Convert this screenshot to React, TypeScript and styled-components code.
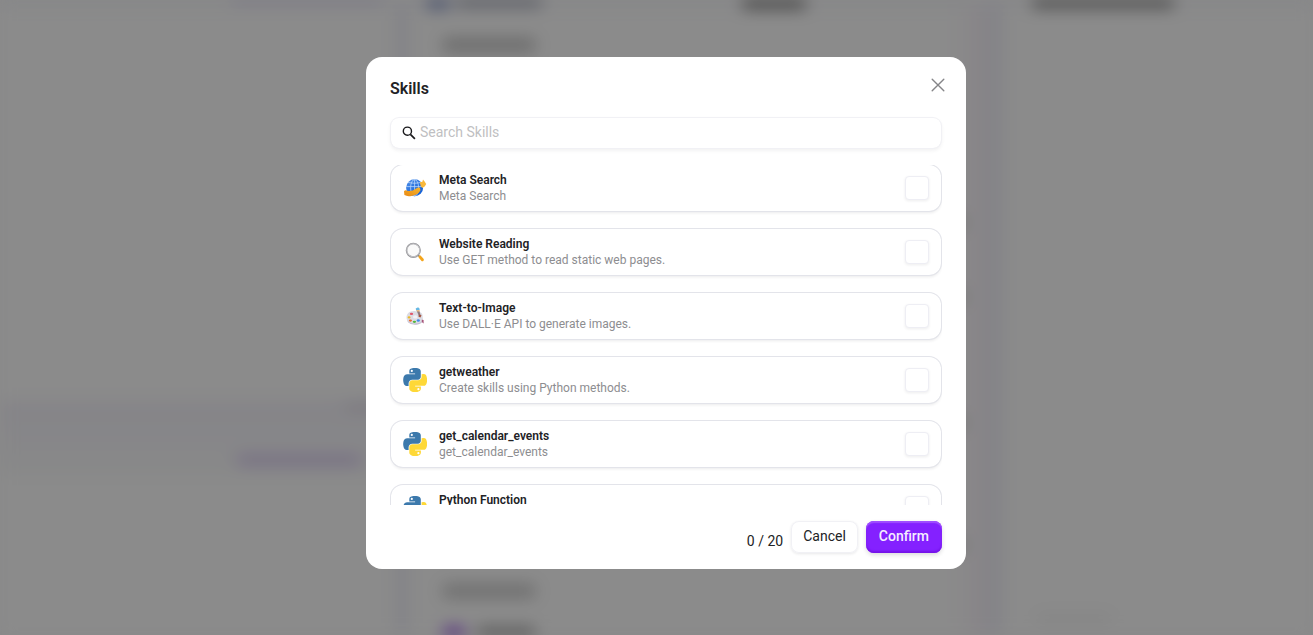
import React, { useState } from "react";
import styled, { createGlobalStyle } from "styled-components";

const GlobalStyle = createGlobalStyle`
  *, *::before, *::after { box-sizing: border-box; }
  body {
    margin: 0;
    font-family: Roboto, "Liberation Sans", sans-serif;
    color: #222225;
    background: #fafafb;
    overflow: hidden;
  }
  button, input { font: inherit; color: inherit; }
`;

/* ---------- page behind the dialog ---------- */

const Page = styled.div`
  display: flex;
  gap: 16px;
  height: 100vh;
  overflow: hidden;
  background: #f1f1f8;
  filter: blur(8px);
`;

const Column = styled.div<{ $width?: string }>`
  flex: ${(p) => (p.$width ? `0 0 ${p.$width}` : "1 1 0")};
  display: flex;
  flex-direction: column;
  min-width: 0;
  background: #fdfdfd;
`;

const TopBar = styled.div<{ $indent: number }>`
  display: flex;
  flex: none;
  height: 8px;
  padding-left: ${(p) => p.$indent}px;
  background: #f3f4f8;
`;

const Line = styled.div<{ $left?: number; $width: number; $height: number; $color: string }>`
  flex: none;
  margin-left: ${(p) => p.$left ?? 0}px;
  width: ${(p) => p.$width}px;
  height: ${(p) => p.$height}px;
  border-radius: 6px;
  background: ${(p) => p.$color};
`;

const Space = styled.div<{ $height: number }>`
  flex: none;
  height: ${(p) => p.$height}px;
`;

const Composer = styled.div`
  flex: none;
  height: 76px;
  padding-top: 4px;
  background: linear-gradient(#f3f1f8, #f8f9f9);
`;

const Middle = styled.div`
  display: flex;
  flex: 1;
  justify-content: space-between;
`;

const Stack = styled.div`
  display: flex;
  flex-direction: column;
`;

const Inline = styled.div`
  display: flex;
`;

const Rail = styled.div`
  display: flex;
  flex-direction: column;
  width: 36px;
  background: linear-gradient(90deg, rgba(240, 232, 244, 0), #f5eff6);
`;

/* ---------- dialog ---------- */

const Overlay = styled.div`
  position: fixed;
  inset: 0;
  display: flex;
  justify-content: center;
  align-items: flex-start;
  padding: 57px 0 0 19px;
  background: rgba(0, 0, 0, 0.45);
`;

const Dialog = styled.section`
  display: flex;
  flex-direction: column;
  width: 600px;
  max-width: 100%;
  padding: 20px 24px 16px;
  border-radius: 16px;
  background: #fff;
`;

const Header = styled.header`
  display: flex;
  justify-content: space-between;
  align-items: flex-start;
  height: 41px;
`;

const Title = styled.h2`
  margin: 0;
  font-size: 16px;
  line-height: 24px;
  font-weight: 600;
`;

const CloseButton = styled.button`
  display: flex;
  margin-right: -4px;
  padding: 0;
  border: 0;
  background: none;
  color: #858588;
  cursor: pointer;
`;

const ring = "0 0 0 1px #f1f1f5, 0 2px 4px rgba(28, 28, 40, 0.08)";

const SearchBox = styled.label`
  display: flex;
  align-items: center;
  gap: 4px;
  height: 30px;
  margin: 0 1px 17px;
  padding: 0 11px 1px;
  border-radius: 8px;
  box-shadow: ${ring};
`;

const SearchInput = styled.input`
  flex: 1;
  min-width: 0;
  height: 22px;
  margin-bottom: 2px;
  padding: 0;
  border: 0;
  outline: 0;
  background: none;
  font-size: 14px;
  line-height: 22px;
  &::placeholder { color: #bfbfc2; opacity: 1; }
`;

const SkillList = styled.ul`
  display: flex;
  flex-direction: column;
  gap: 18px;
  height: 340px;
  margin: 0;
  padding: 0 1px;
  list-style: none;
  overflow-y: auto;
  scrollbar-width: none;
`;

const SkillCard = styled.li`
  flex: none;
  border-radius: 12px;
  box-shadow: 0 0 0 1px #e3e4ea, 0 2px 3px rgba(28, 28, 40, 0.09);
`;

const SkillLabel = styled.label`
  display: flex;
  align-items: center;
  height: 46px;
  padding: 0 12px;
  cursor: pointer;
`;

const SkillText = styled.span`
  flex: 1;
  min-width: 0;
  margin-left: 12px;
  font-size: 12px;
  line-height: 16px;
`;

const SkillName = styled.span`
  display: block;
  font-weight: 600;
`;

const SkillNote = styled.span`
  display: block;
  color: #8d8d90;
`;

const Tick = styled.input`
  appearance: none;
  width: 24px;
  height: 24px;
  margin: 0;
  border: 1px solid #eeeef4;
  border-radius: 4px;
  background: #fff;
  box-shadow: 0 1px 3px rgba(28, 28, 40, 0.08);
  &:checked { background: #8421ff; border-color: #8421ff; }
`;

const Footer = styled.footer`
  display: flex;
  justify-content: flex-end;
  align-items: flex-end;
  gap: 8px;
  margin-top: 16px;
`;

const Count = styled.span`
  font-size: 14px;
  line-height: 24px;
`;

const Button = styled.button<{ $primary?: boolean }>`
  height: 32px;
  padding: ${(p) => (p.$primary ? "0 13px 2px" : "0 12px 2px")};
  border: 0;
  border-radius: 8px;
  font-size: 14px;
  line-height: 22px;
  font-weight: ${(p) => (p.$primary ? 500 : 400)};
  color: ${(p) => (p.$primary ? "#f5edff" : "#222225")};
  background: ${(p) => (p.$primary ? "#8421ff" : "#fff")};
  box-shadow: ${(p) =>
    p.$primary
      ? "inset 0 2px 1px #a04fff, inset 0 -2px 2px #7414e8, 0 2px 4px rgba(28, 28, 40, 0.16)"
      : "inset 0 0 0 1px #f1f1f5, 0 1px 3px rgba(28, 28, 40, 0.1)"};
  cursor: pointer;
`;

/* ---------- icons ---------- */

const CloseIcon = () => (
  <svg width="16" height="16" viewBox="0 0 16 16" fill="none" stroke="currentColor" strokeWidth="1.4" strokeLinecap="round">
    <path d="M2.200 2.200l11.600 11.600M13.800 2.200L2.200 13.800" />
  </svg>
);

const SearchIcon = () => (
  <svg width="14" height="14" viewBox="0 0 14 14" fill="none" stroke="#19191c" strokeWidth="1.4">
    <circle cx="5.4" cy="5.2" r="4.1" />
    <path d="M8.400 8.300l4.500 4.500" strokeWidth="1.7" />
  </svg>
);

const GlobeIcon = () => (
  <svg width="24" height="24" viewBox="0 0 24 24">
    <defs>
      <linearGradient id="globe" x1="0" y1="0" x2="1" y2="1">
        <stop offset="0" stopColor="#4d8fe9" />
        <stop offset="1" stopColor="#0a58d3" />
      </linearGradient>
      <linearGradient id="sweep" x1="0" y1="1" x2="1" y2="0">
        <stop offset="0" stopColor="#e98a15" />
        <stop offset="1" stopColor="#f6b52c" />
      </linearGradient>
    </defs>
    <circle cx="11.600" cy="11.800" r="8.500" fill="url(#globe)" />
    <g fill="none" stroke="#b9d6fa" strokeWidth=".8">
      <ellipse cx="11.600" cy="11.800" rx="4" ry="8.300" />
      <path d="M11.600 3.400v17M3.200 10.600h16.800M5 6.500q6.600 1.600 13.200 0" />
    </g>
    <path d="M1 15.200q1.200-1.800 3.200-.5q4.600 1.200 8.200-1.700q2.600-2 4.600-1.200l.4 2.800q-2.600 4.900-9 5.300q-3.900 1-7-.8z" fill="url(#sweep)" />
    <path d="M16.800 6.200l2.600-.4.6-2.200 1.600 2 1.600 2.500-1.500 2.400-2.400 1.500-1.600-2z" fill="#f9b83a" />
  </svg>
);

const MagnifierIcon = () => (
  <svg width="24" height="24" viewBox="0 0 24 24">
    <circle cx="10.300" cy="10.300" r="6.800" fill="#fafafa" stroke="#939397" strokeWidth="1.600" />
    <circle cx="10.300" cy="10.300" r="6.500" fill="none" stroke="#d4d4d7" strokeWidth=".7" />
    <path d="M15.100 15.200l1.900 1.800" stroke="#85858a" strokeWidth="1.500" />
    <path d="M16.900 16.900l2.500 2.900" stroke="#f4a51c" strokeWidth="2.900" strokeLinecap="round" />
  </svg>
);

const PaletteIcon = () => (
  <svg width="24" height="24" viewBox="0 0 24 24">
    <path d="M12.500 7.200C7 6.500 3.500 9.500 3.500 13.600c0 4.200 4 6.700 8.500 6.700 4.200 0 8-1.800 8-4.700 0-1.200-.5-2.600-.5-4.500 0-2.700-3.500-3.700-7-3.900z" fill="#dcdce4" />
    <path d="M4 15.500c1 2.800 4.400 4 8 4s7-1.300 8-3.600c-.2 2.900-4 4.800-8 4.800s-7.800-1.800-8-5.200z" fill="#c2bdd0" />
    <ellipse cx="12.300" cy="12.900" rx="2.300" ry="1.700" fill="#f2f2f6" />
    <ellipse cx="8.500" cy="9.900" rx="1.700" ry="1.100" fill="#e2566b" />
    <ellipse cx="6.100" cy="13.400" rx="1.500" ry="1.100" fill="#edb928" />
    <ellipse cx="7.400" cy="16.600" rx="1.600" ry="1.100" fill="#e9692d" />
    <ellipse cx="11.400" cy="17.800" rx="1.700" ry="1.100" fill="#54b83c" />
    <ellipse cx="15.300" cy="16.500" rx="1.600" ry="1.200" fill="#3e8bea" />
    <path d="M13.700 6.700l2.500-.3 1.700 5.500-1.600 1z" fill="#8e7b80" />
    <path d="M12.700 4.600l2.400-1.400 1.800 1.800-1.200 2-2.500-.4z" fill="#66b8e4" />
    <path d="M13.500 5.900h3v1.700h-2.700z" fill="#eabd85" />
    <path d="M16 10.400l2.500 .9-1 2.200-2-.8z" fill="#a65540" />
    <path d="M18.800 15.700l1.800 .4v3.400l-1.800-1.600z" fill="#a65479" />
  </svg>
);

const PythonIcon = () => (
  <svg width="24" height="24" viewBox="0 0 24 24">
    <path
      fill="#3c79ac"
      d="M11.900 0C10.900 0 10 .1 9.200 .2 6.800 .7 6.300 1.600 6.300 3.200v2.200h5.800v.8H4.200c-1.700 0-3.100 1-3.600 2.900-.5 2.200-.6 3.600 0 5.900 .4 1.700 1.400 2.900 3 2.900h2v-2.600c0-1.900 1.700-3.600 3.600-3.600h5.700c1.600 0 2.900-1.300 2.900-2.900V3.200c0-1.500-1.300-2.700-2.900-3C14 .1 12.900 0 11.900 0zM8.800 1.800a1.100 1.100 0 1 1 0 2.200 1.100 1.100 0 0 1 0-2.200z"
    />
    <path
      fill="#fed837"
      d="M18.600 6.200v2.500c0 2-1.700 3.600-3.600 3.600H9.200c-1.600 0-2.900 1.400-2.900 3v5.500c0 1.500 1.400 2.500 2.900 2.900 1.900 .5 3.700 .6 5.800 0 1.500-.4 2.900-1.300 2.900-2.900v-2.200h-5.800v-.8h8.700c1.700 0 2.300-1.200 2.900-2.900 .6-1.800 .6-3.500 0-5.900-.4-1.700-1.200-2.900-2.900-2.900zM15.400 20.100a1.100 1.100 0 1 1 0 2.200 1.100 1.100 0 0 1 0-2.200z"
    />
  </svg>
);

const skills = [
  { name: "Meta Search", note: "Meta Search", Icon: GlobeIcon },
  { name: "Website Reading", note: "Use GET method to read static web pages.", Icon: MagnifierIcon },
  { name: "Text-to-Image", note: "Use DALL·E API to generate images.", Icon: PaletteIcon },
  { name: "getweather", note: "Create skills using Python methods.", Icon: PythonIcon },
  { name: "get_calendar_events", note: "get_calendar_events", Icon: PythonIcon },
  { name: "Python Function", note: "Create skills using Python methods.", Icon: PythonIcon },
];

const Backdrop = () => (
  <Page aria-hidden="true">
    <Column $width="30%">
      <TopBar $indent={232}>
        <Line $width={150} $height={3} $color="#c3baea" />
      </TopBar>
      <Space $height={392} />
      <Composer>
        <Line $left={345} $width={50} $height={6} $color="#d8d2e2" />
        <Space $height={44} />
        <Line $left={236} $width={126} $height={12} $color="#dccff2" />
      </Composer>
    </Column>
    <Column $width="44%">
      <TopBar $indent={16}>
        <Line $width={24} $height={8} $color="#6478b8" />
        <Line $left={6} $width={86} $height={6} $color="#7c8298" />
        <Line $left={200} $width={64} $height={8} $color="#606060" />
      </TopBar>
      <Middle>
        <Stack>
          <Space $height={30} />
          <Line $left={32} $width={94} $height={14} $color="#c4c4c4" />
          <Space $height={532} />
          <Line $left={32} $width={94} $height={14} $color="#cacaca" />
          <Space $height={30} />
          <Inline>
            <Line $left={32} $width={24} $height={24} $color="#7a1ae0" />
            <Line $left={10} $width={60} $height={20} $color="#858585" />
          </Inline>
        </Stack>
        <Rail>
          <Space $height={208} />
          <Line $width={14} $height={14} $color="#d6d6d6" />
          <Space $height={60} />
          <Line $width={14} $height={14} $color="#d6d6d6" />
          <Space $height={112} />
          <Line $width={14} $height={14} $color="#d6d6d6" />
          <Space $height={108} />
          <Line $width={14} $height={14} $color="#d6d6d6" />
        </Rail>
      </Middle>
    </Column>
    <Column>
      <TopBar $indent={28}>
        <Line $width={142} $height={7} $color="#606060" />
      </TopBar>
      <Space $height={606} />
      <Line $left={32} $width={76} $height={10} $color="#f2f2f2" />
    </Column>
  </Page>
);

export default function App() {
  const [picked, setPicked] = useState<string[]>([]);
  const toggle = (name: string) =>
    setPicked((all) => (all.includes(name) ? all.filter((n) => n !== name) : [...all, name]));

  return (
    <>
      <GlobalStyle />
      <Backdrop />
      <Overlay>
        <Dialog role="dialog" aria-modal="true" aria-labelledby="skills-title">
          <Header>
            <Title id="skills-title">Skills</Title>
            <CloseButton type="button" aria-label="Close">
              <CloseIcon />
            </CloseButton>
          </Header>
          <SearchBox>
            <SearchIcon />
            <SearchInput type="text" placeholder="Search Skills" aria-label="Search Skills" />
          </SearchBox>
          <SkillList>
            {skills.map(({ name, note, Icon }) => (
              <SkillCard key={name}>
                <SkillLabel>
                  <Icon />
                  <SkillText>
                    <SkillName>{name}</SkillName>
                    <SkillNote>{note}</SkillNote>
                  </SkillText>
                  <Tick type="checkbox" checked={picked.includes(name)} onChange={() => toggle(name)} />
                </SkillLabel>
              </SkillCard>
            ))}
          </SkillList>
          <Footer>
            <Count>{picked.length} / 20</Count>
            <Button type="button">Cancel</Button>
            <Button type="button" $primary>
              Confirm
            </Button>
          </Footer>
        </Dialog>
      </Overlay>
    </>
  );
}
